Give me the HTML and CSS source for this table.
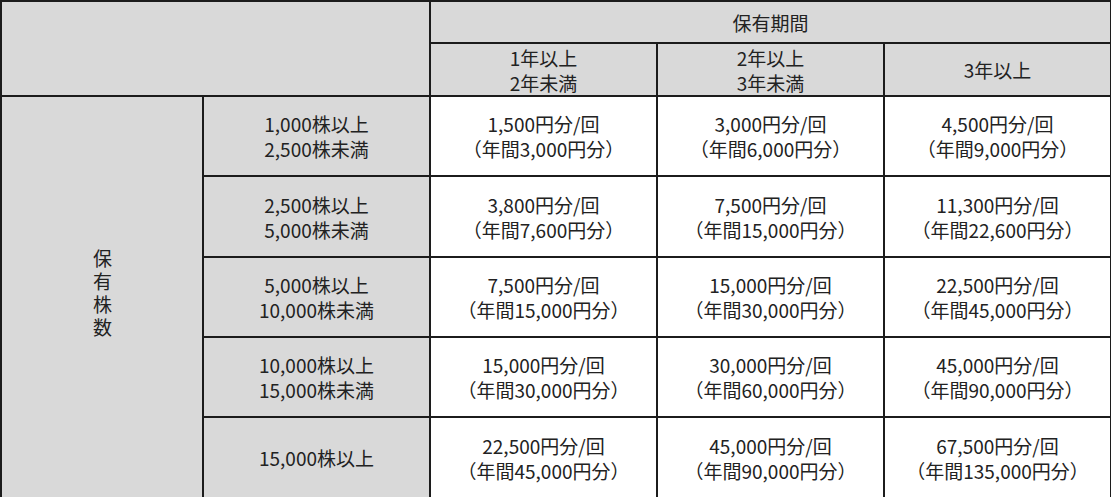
FILE: index.html
```html
<!DOCTYPE html>
<html lang="ja">
<head>
<meta charset="utf-8">
<link rel="stylesheet" href="styles.css">
</head>
<body>
<table class="grid">
  <colgroup>
    <col class="c1"><col class="c2"><col class="c3"><col class="c3"><col class="c3">
  </colgroup>
  <tr class="h1">
    <th class="gray" colspan="2" rowspan="2"></th>
    <th class="gray" colspan="3">保有期間</th>
  </tr>
  <tr class="h2">
    <th class="gray">1年以上<br>2年未満</th>
    <th class="gray">2年以上<br>3年未満</th>
    <th class="gray">3年以上</th>
  </tr>
  <tr class="r">
    <th class="gray" rowspan="5"><span class="vert">保有株数</span></th>
    <th class="gray">1,000株以上<br>2,500株未満</th>
    <td>1,500円分/回<br>（年間3,000円分）</td>
    <td>3,000円分/回<br>（年間6,000円分）</td>
    <td>4,500円分/回<br>（年間9,000円分）</td>
  </tr>
  <tr class="r2">
    <th class="gray">2,500株以上<br>5,000株未満</th>
    <td>3,800円分/回<br>（年間7,600円分）</td>
    <td>7,500円分/回<br>（年間15,000円分）</td>
    <td>11,300円分/回<br>（年間22,600円分）</td>
  </tr>
  <tr class="r">
    <th class="gray">5,000株以上<br>10,000株未満</th>
    <td>7,500円分/回<br>（年間15,000円分）</td>
    <td>15,000円分/回<br>（年間30,000円分）</td>
    <td>22,500円分/回<br>（年間45,000円分）</td>
  </tr>
  <tr class="r">
    <th class="gray">10,000株以上<br>15,000株未満</th>
    <td>15,000円分/回<br>（年間30,000円分）</td>
    <td>30,000円分/回<br>（年間60,000円分）</td>
    <td>45,000円分/回<br>（年間90,000円分）</td>
  </tr>
  <tr class="r2">
    <th class="gray">15,000株以上</th>
    <td>22,500円分/回<br>（年間45,000円分）</td>
    <td>45,000円分/回<br>（年間90,000円分）</td>
    <td>67,500円分/回<br>（年間135,000円分）</td>
  </tr>
</table>
</body>
</html>
```
FILE: styles.css
```css
html, body {
  margin: 0;
  padding: 0;
  background: #ffffff;
}
.grid {
  border-collapse: collapse;
  table-layout: fixed;
  width: 1111px;
  font-family: "Noto Sans CJK JP", "Noto Sans", sans-serif;
  font-size: 19px;
  line-height: 25px;
  color: #222222;
}
.c1 { width: 202px; }
.c2 { width: 227px; }
.c3 { width: 227px; }
.grid th, .grid td {
  border: 2px solid #1c1c1c;
  padding: 0;
  text-align: center;
  vertical-align: middle;
  font-weight: normal;
  background: #ffffff;
}
.grid .gray {
  background: #d9d9d9;
}
.h1 { height: 42px; }
.h2 { height: 53px; }
.r { height: 80px; }
.r2 { height: 81px; }
.vert {
  display: inline-block;
  writing-mode: vertical-rl;
  text-orientation: upright;
  letter-spacing: 4px;
  line-height: 22px;
}
```
